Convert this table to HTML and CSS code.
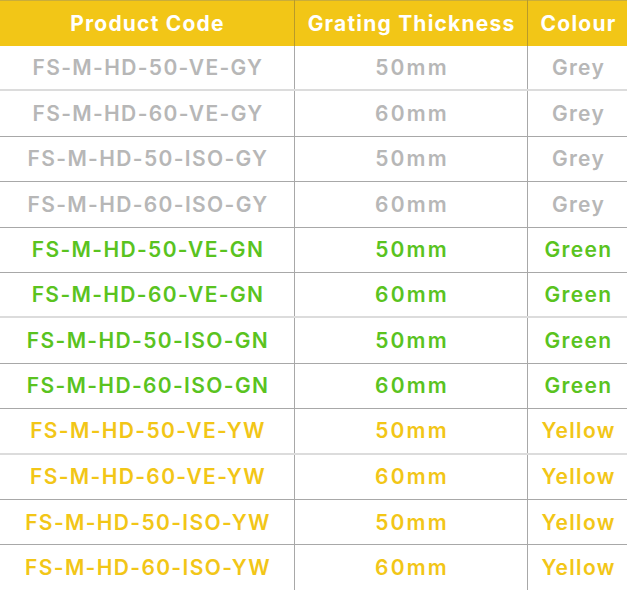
FILE: index.html
```html
<!DOCTYPE html>
<html>
<head>
<meta charset="utf-8">
<link rel="stylesheet" href="styles.css">
</head>
<body>
<table class="spec">
  <thead>
    <tr><th class="c1">Product Code</th><th class="c2">Grating Thickness</th><th class="c3">Colour</th></tr>
  </thead>
  <tbody>
    <tr class="grey light"><td class="code">FS-M-HD-50-VE-GY</td><td class="mm">50mm</td><td class="col">Grey</td></tr>
    <tr class="grey"><td class="code">FS-M-HD-60-VE-GY</td><td class="mm">60mm</td><td class="col">Grey</td></tr>
    <tr class="grey"><td class="code">FS-M-HD-50-ISO-GY</td><td class="mm">50mm</td><td class="col">Grey</td></tr>
    <tr class="grey"><td class="code">FS-M-HD-60-ISO-GY</td><td class="mm">60mm</td><td class="col">Grey</td></tr>
    <tr class="green"><td class="code">FS-M-HD-50-VE-GN</td><td class="mm">50mm</td><td class="col">Green</td></tr>
    <tr class="green light"><td class="code">FS-M-HD-60-VE-GN</td><td class="mm">60mm</td><td class="col">Green</td></tr>
    <tr class="green"><td class="code">FS-M-HD-50-ISO-GN</td><td class="mm">50mm</td><td class="col">Green</td></tr>
    <tr class="green"><td class="code">FS-M-HD-60-ISO-GN</td><td class="mm">60mm</td><td class="col">Green</td></tr>
    <tr class="yellow light"><td class="code">FS-M-HD-50-VE-YW</td><td class="mm">50mm</td><td class="col">Yellow</td></tr>
    <tr class="yellow"><td class="code">FS-M-HD-60-VE-YW</td><td class="mm">60mm</td><td class="col">Yellow</td></tr>
    <tr class="yellow"><td class="code">FS-M-HD-50-ISO-YW</td><td class="mm">50mm</td><td class="col">Yellow</td></tr>
    <tr class="yellow"><td class="code">FS-M-HD-60-ISO-YW</td><td class="mm">60mm</td><td class="col">Yellow</td></tr>
  </tbody>
</table>
</body>
</html>
```
FILE: styles.css
```css
html, body {
  margin: 0;
  padding: 0;
  background: #ffffff;
}
.spec {
  border-collapse: collapse;
  width: 626px;
  table-layout: fixed;
  font-family: "Inter", "Open Sans", sans-serif;
  font-weight: 600;
  font-size: 21px;
  border-right: 2px solid #dcdcdc;
}
.spec .c1 { width: 294px; }
.spec .c2 { width: 232px; }
.spec .c3 { width: 100px; }
.spec th {
  background: #f2c617;
  color: #ffffff;
  height: 45px;
  padding: 0;
  text-align: center;
  letter-spacing: 1.2px;
  text-indent: 1px;
  border-right: 1px solid #b89a2a;
  border-top: 1px solid #c9ad3a;
}
.spec th:last-child { border-right: none; }
.spec td {
  height: 44.4px;
  padding: 0;
  text-align: center;
  border-bottom: 1px solid #a8a8a8;
  border-right: 1px solid #a8a8a8;
}
.spec td:last-child { border-right: none; }
.spec tr.light td { border-bottom: 2px solid #dcdcdc; height: 43.4px; }
.spec td.code { letter-spacing: 1.35px; text-indent: 2px; }
.spec td.mm { letter-spacing: 2.2px; text-indent: 2px; }
.spec td.col { letter-spacing: 1.3px; text-indent: 1px; }
.grey td { color: #b7b7b7; }
.green td { color: #5ac31f; }
.yellow td { color: #f2c617; }
```
